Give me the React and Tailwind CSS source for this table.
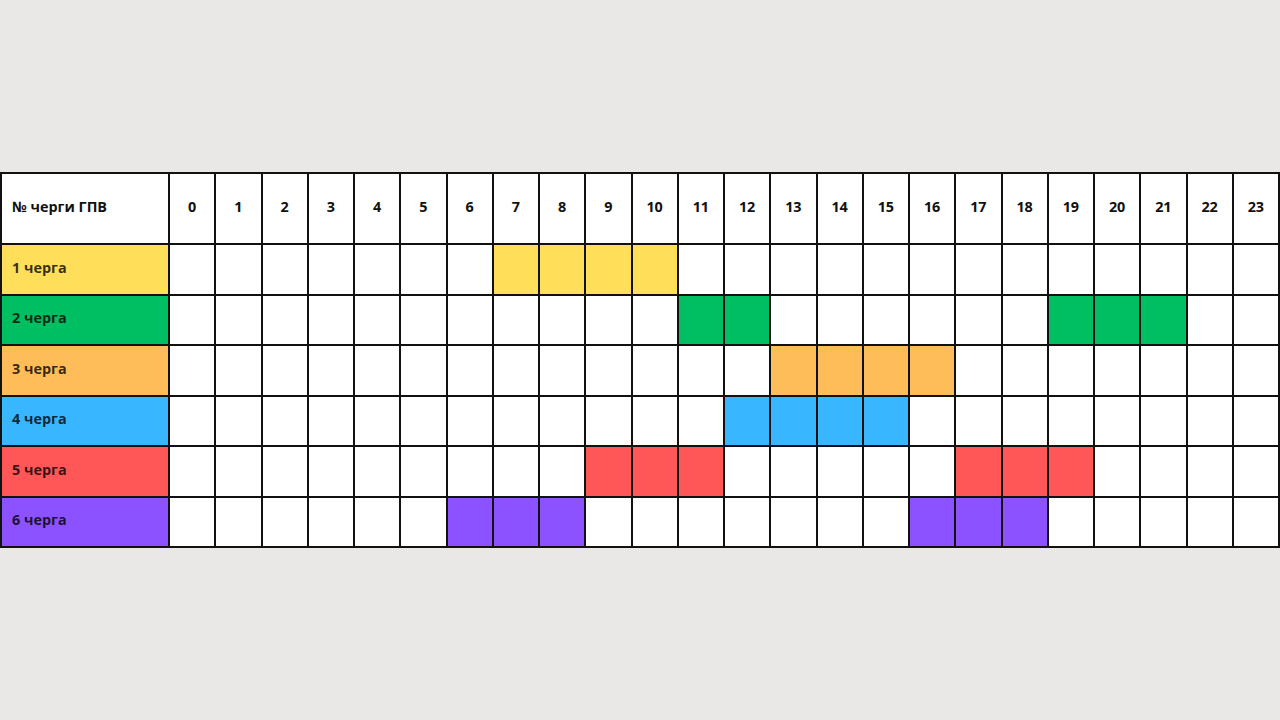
import React from "react";

const rows = [
  { label: "1 черга", bg: "bg-[#ffde59]", hours: [7, 8, 9, 10] },
  { label: "2 черга", bg: "bg-[#00bf63]", hours: [11, 12, 19, 20, 21] },
  { label: "3 черга", bg: "bg-[#ffbd59]", hours: [13, 14, 15, 16] },
  { label: "4 черга", bg: "bg-[#38b6ff]", hours: [12, 13, 14, 15] },
  { label: "5 черга", bg: "bg-[#ff5757]", hours: [9, 10, 11, 17, 18, 19] },
  { label: "6 черга", bg: "bg-[#8c52ff]", hours: [6, 7, 8, 16, 17, 18] },
];

const hours = Array.from({ length: 24 }, (_, i) => i);

export default function App() {
  return (
    <div
      className="w-[1280px] h-[720px] bg-[#e9e8e6] flex items-center"
      style={{ fontFamily: '"Open Sans", "Liberation Sans", sans-serif' }}
    >
      <div className="w-[1280px] h-[376px] bg-[#111] p-[2px] grid grid-cols-[166px_repeat(24,minmax(0,1fr))] grid-rows-[69px_repeat(6,minmax(0,1fr))] gap-[2px]">
        <div className="bg-white flex items-center pl-[10px] pb-[3px] text-[14.4px] font-bold text-[#111]">
          № черги ГПВ
        </div>
        {hours.map((h) => (
          <div
            key={h}
            className="bg-white flex items-center justify-center pb-[3px] text-[14.4px] font-bold text-[#111]"
          >
            {h}
          </div>
        ))}
        {rows.map((r) => (
          <React.Fragment key={r.label}>
            <div
              className={`${r.bg} flex items-center pl-[10px] pb-[3px] text-[14.4px] font-bold text-black/80`}
            >
              {r.label}
            </div>
            {hours.map((h) => (
              <div
                key={h}
                className={r.hours.includes(h) ? r.bg : "bg-white"}
              />
            ))}
          </React.Fragment>
        ))}
      </div>
    </div>
  );
}
